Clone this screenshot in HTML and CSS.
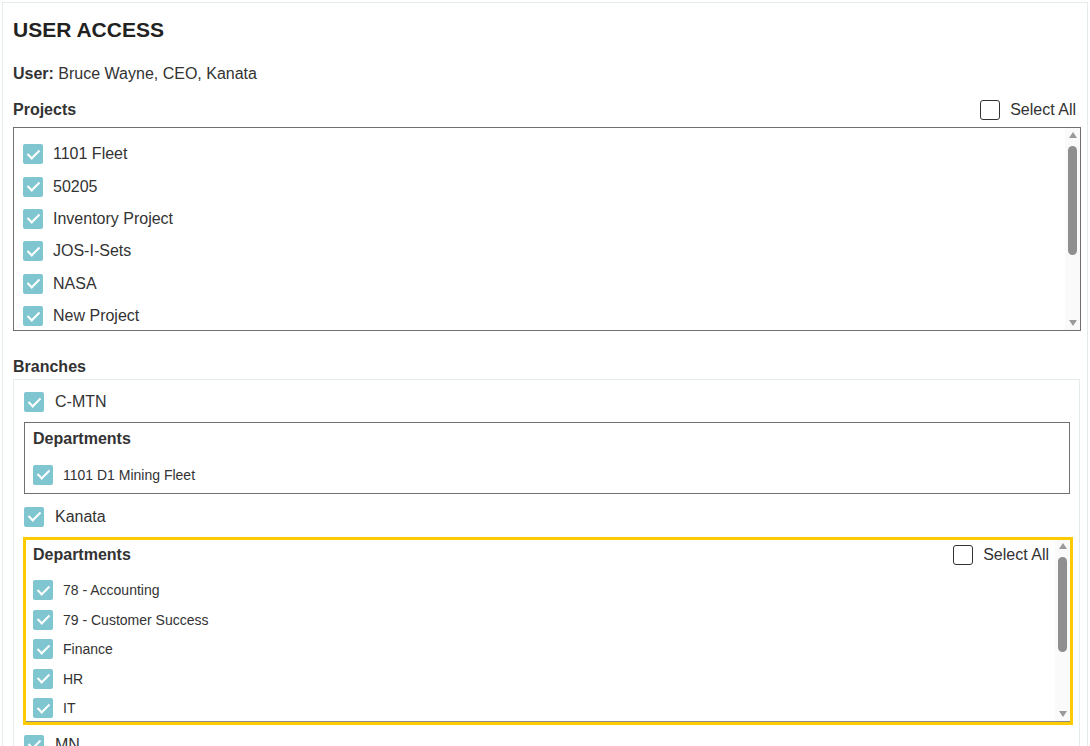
FILE: index.html
```html
<!DOCTYPE html>
<html lang="en">
<head>
    <meta charset="UTF-8">
    <meta name="viewport" content="width=device-width, initial-scale=1.0">
    <title>User Access</title>
    <link rel="stylesheet" href="styles.css">
</head>
<body>
    <div class="panel">
        <h1 class="panel-title">USER ACCESS</h1>
        <p class="user-line"><strong>User:</strong> Bruce Wayne, CEO, Kanata</p>

        <!-- Projects -->
        <div class="section-head">
            <h2>Projects</h2>
            <label class="select-all"><span class="box"></span>Select All</label>
        </div>
        <div class="projects">
            <div class="list">
                <label class="check-row"><span class="box checked"></span>1101 Fleet</label>
                <label class="check-row"><span class="box checked"></span>50205</label>
                <label class="check-row"><span class="box checked"></span>Inventory Project</label>
                <label class="check-row"><span class="box checked"></span>JOS-I-Sets</label>
                <label class="check-row"><span class="box checked"></span>NASA</label>
                <label class="check-row"><span class="box checked"></span>New Project</label>
                <label class="check-row"><span class="box checked"></span>Pilot Project</label>
                <label class="check-row"><span class="box checked"></span>Site Expansion</label>
                <label class="check-row"><span class="box checked"></span>Test Project</label>
            </div>
            <div class="scrollbar">
                <span class="arrow-up"></span>
                <span class="thumb" style="height: 109px"></span>
                <span class="arrow-down"></span>
            </div>
        </div>

        <!-- Branches -->
        <div class="section-head branches-head">
            <h2>Branches</h2>
        </div>
        <div class="branches">
            <label class="check-row branch"><span class="box checked"></span>C-MTN</label>
            <div class="dept-box">
                <div class="section-head">
                    <h3>Departments</h3>
                </div>
                <label class="check-row dept"><span class="box checked"></span>1101 D1 Mining Fleet</label>
            </div>

            <label class="check-row branch"><span class="box checked"></span>Kanata</label>
            <div class="dept-box active">
                <div class="list">
                    <div class="section-head">
                        <h3>Departments</h3>
                        <label class="select-all"><span class="box"></span>Select All</label>
                    </div>
                    <label class="check-row dept"><span class="box checked"></span>78 - Accounting</label>
                    <label class="check-row dept"><span class="box checked"></span>79 - Customer Success</label>
                    <label class="check-row dept"><span class="box checked"></span>Finance</label>
                    <label class="check-row dept"><span class="box checked"></span>HR</label>
                    <label class="check-row dept"><span class="box checked"></span>IT</label>
                    <label class="check-row dept"><span class="box checked"></span>Marketing</label>
                    <label class="check-row dept"><span class="box checked"></span>Operations</label>
                    <label class="check-row dept"><span class="box checked"></span>Sales</label>
                </div>
                <div class="scrollbar">
                    <span class="arrow-up"></span>
                    <span class="thumb" style="height: 95px"></span>
                    <span class="arrow-down"></span>
                </div>
            </div>

            <label class="check-row branch"><span class="box checked"></span>MN</label>
            <div class="dept-box">
                <div class="section-head">
                    <h3>Departments</h3>
                </div>
                <label class="check-row dept"><span class="box checked"></span>MN Operations</label>
            </div>
        </div>
    </div>
</body>
</html>
```

FILE: styles.css
```css
/* General */
body {
    font-family: "Liberation Sans", Arial, sans-serif;
    margin: 0;
    padding: 0;
    background-color: #fff;
    color: #333;
}

.panel {
    margin: 2px;
    padding: 15px 6px 20px 10px;
    border: 1px solid #e4ecec;
}

.panel-title {
    margin: 0 0 22px;
    font-size: 21px;
    line-height: 24px;
    color: #222;
}

.user-line {
    margin: 0 0 16px;
    font-size: 16px;
    line-height: 20px;
}

/* Section headers */
.section-head {
    display: flex;
    justify-content: space-between;
    align-items: center;
    height: 20px;
    margin-bottom: 7px;
    padding-right: 5px;
}

.section-head h2,
.section-head h3 {
    margin: 0;
    font-size: 16px;
    line-height: 20px;
    color: #333;
}

.branches-head {
    margin-top: 26px;
    margin-bottom: 2px;
}

.select-all {
    display: flex;
    align-items: center;
    gap: 10px;
    font-size: 16px;
    color: #333;
}

/* Checkboxes */
.box {
    display: inline-flex;
    align-items: center;
    justify-content: center;
    flex: none;
    width: 20px;
    height: 20px;
    box-sizing: border-box;
    border: 1px solid #333;
    border-radius: 3px;
    background-color: #fff;
}

.box.checked {
    border: none;
    border-radius: 2px;
    background-color: #80c6d1;
}

.box.checked::after {
    content: "";
    width: 5px;
    height: 10px;
    margin-top: -3px;
    border: solid #fff;
    border-width: 0 2px 2px 0;
    transform: rotate(45deg);
}

.check-row {
    display: flex;
    align-items: center;
    gap: 10px;
    height: 32.4px;
    font-size: 16px;
}

/* Scroll areas */
.list {
    flex: 1;
    min-width: 0;
    overflow: hidden;
}

.scrollbar {
    display: flex;
    flex-direction: column;
    align-items: center;
    width: 15px;
    flex: none;
    background-color: #fafafa;
}

.arrow-up,
.arrow-down {
    width: 0;
    height: 0;
    border-left: 4.5px solid transparent;
    border-right: 4.5px solid transparent;
}

.arrow-up {
    border-bottom: 6px solid #9a9a9a;
    margin: 4px 0 8px;
}

.arrow-down {
    border-top: 6px solid #9a9a9a;
    margin: auto 0 4px;
}

.thumb {
    width: 9px;
    border-radius: 5px;
    background-color: #8f8f8f;
}

/* Projects list */
.projects {
    display: flex;
    height: 204px;
    box-sizing: border-box;
    border: 1px solid #707070;
}

.projects .list {
    padding: 10px 0 0 9px;
}

/* Branches */
.branches {
    border: 1px solid #e4ecec;
    padding: 7px 9px 0 10px;
    margin-right: 1px;
}

.check-row.branch {
    height: 30px;
    gap: 11px;
}

.dept-box {
    border: 1px solid #707070;
    padding: 6px 9px 3px 8px;
    margin: 5px 0 8px;
}

.dept-box .section-head {
    margin-bottom: 11px;
}

.check-row.dept {
    height: 29.5px;
    font-size: 14px;
}

.dept-box.active {
    display: flex;
    height: 188px;
    box-sizing: border-box;
    border: 3px solid #fecb00;
    padding: 0 0 1px;
    margin: 5px -3px 5px -1px;
    box-shadow: inset 0 -1px 0 #8a8a8a;
}

.dept-box.active .list {
    padding: 5px 0 0 7px;
}

.dept-box.active .section-head {
    padding-right: 6px;
}

.dept-box.active .arrow-up {
    margin: 3px 0 8px;
}
```
